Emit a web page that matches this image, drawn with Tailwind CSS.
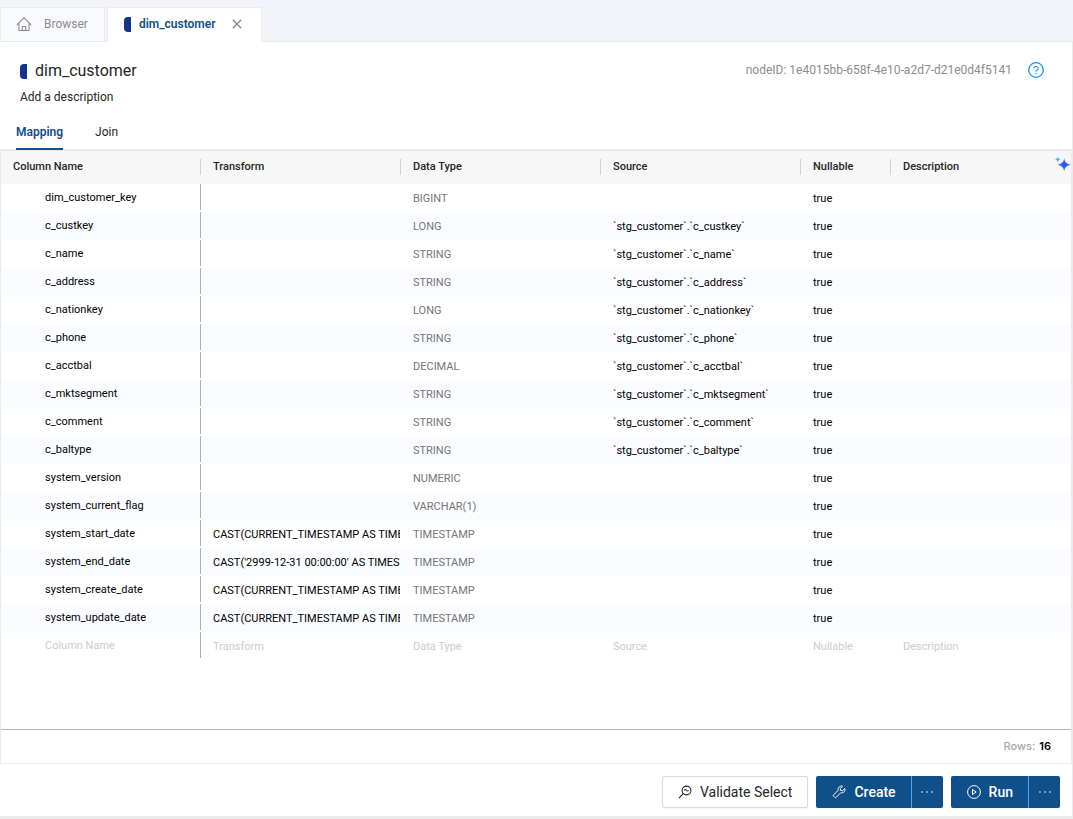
<!DOCTYPE html>
<html lang="en">
<head>
  <meta charset="UTF-8">
  <meta name="viewport" content="width=device-width, initial-scale=1">
  <title>dim_customer</title>
  <script src="https://cdn.jsdelivr.net/npm/@tailwindcss/browser@4"></script>
</head>
<body class="flex min-h-screen flex-col bg-[#f3f4f9] font-['Roboto',sans-serif] text-[#262626]">
  <!-- open files -->
  <nav class="flex h-[42px] items-end gap-0.5 border-b border-[#ebebeb] pt-[7px] text-xs">
    <a href="#" class="flex h-full items-center gap-3 border border-b-0 border-[#ebebeb] bg-[#f9fafd] pr-4 pb-0.5 pl-[15px] text-[#8c8c8c]">
      <svg class="size-4" viewBox="0 0 16 16" fill="none" stroke="currentColor" stroke-width="1.1" stroke-linejoin="round" stroke-linecap="round"><path d="M1.200 8.700 8 1.900l6.800 6.800M3 7.200v7.300h10V7.200M6.300 14.300v-3.800h3.400v3.800"/></svg>
      Browser
    </a>
    <div class="-mb-px flex h-[35px] items-center border border-b-0 border-[#ebebeb] bg-white px-4 pb-0.5">
      <a href="#" class="flex items-center gap-2 font-semibold text-[#0f4f8a]">
        <span class="h-[15px] w-[7px] rounded-l bg-[#13338f]"></span>
        dim_customer
      </a>
      <button type="button" aria-label="Close tab" class="ml-[13px] p-0.5 text-[#8c8c8c]">
        <svg class="size-3" viewBox="0 0 12 12" fill="none" stroke="currentColor" stroke-width="1.4"><path d="m1.8 1.8 8.4 8.4M10.2 1.8l-8.400 8.400"/></svg>
      </button>
    </div>
  </nav>

  <main class="flex flex-1 flex-col border-r border-b-3 border-[#ebebeb] bg-white">
    <header class="flex items-start justify-between px-5 pt-4">
      <div class="pt-px">
        <h1 class="flex items-center gap-2 text-base">
          <span class="h-[15px] w-[7px] rounded-l bg-[#13338f]"></span>
          dim_customer
        </h1>
        <p class="mt-1.5 text-xs">Add a description</p>
      </div>
      <div class="flex h-6 items-center gap-4 pr-2 text-xs text-[#8c8c8c]">
        <span>nodeID: 1e4015bb-658f-4e10-a2d7-d21e0d4f5141</span>
        <button type="button" aria-label="Help" class="text-[#1890ff]">
          <svg class="size-4" viewBox="0 0 16 16" fill="none" stroke="currentColor" stroke-width="1.3"><circle cx="8" cy="8" r="7.3"/><path stroke-width="1.1" d="M5.800 6.500c0-1.200 1-2 2.200-2s2.200.8 2.200 2c0 .8-.5 1.400-1.300 1.700-.6.3-.9.600-.9 1.300v.3"/><circle cx="8" cy="11.500" r=".7" fill="currentColor" stroke="none"/></svg>
        </button>
      </div>
    </header>

    <div class="mt-[19px] flex gap-8 border-b-2 border-[#ebebeb] px-4 text-xs">
      <a href="#" class="-mb-px border-b-2 border-[#0f4f8a] pb-2 font-semibold text-[#0f4f8a]">Mapping</a>
      <a href="#" class="pb-2">Join</a>
    </div>

    <section class="flex flex-1 flex-col border-x border-b border-[#ebebeb]">
      <div class="relative">
        <table class="w-full table-fixed text-left text-[11px]">
          <colgroup>
            <col class="w-[200px]">
            <col class="w-[200px]">
            <col class="w-[200px]">
            <col class="w-[200px]">
            <col class="w-[90px]">
            <col>
          </colgroup>
          <thead class="bg-[#f7f7f7]">
            <tr class="h-[33px]">
              <th class="p-0 pb-0.5 font-medium"><div class="border-r border-[#d0d3d6] px-3 leading-4">Column Name</div></th>
              <th class="p-0 pb-0.5 font-medium"><div class="border-r border-[#d0d3d6] px-3 leading-4">Transform</div></th>
              <th class="p-0 pb-0.5 font-medium"><div class="border-r border-[#d0d3d6] px-3 leading-4">Data Type</div></th>
              <th class="p-0 pb-0.5 font-medium"><div class="border-r border-[#d0d3d6] px-3 leading-4">Source</div></th>
              <th class="p-0 pb-0.5 font-medium"><div class="border-r border-[#d0d3d6] px-3 leading-4">Nullable</div></th>
              <th class="p-0 pb-0.5 font-medium"><div class="px-3 leading-4">Description</div></th>
            </tr>
          </thead>
          <tbody id="columns" class="text-black"></tbody>
        </table>
        <button type="button" aria-label="Generate descriptions" class="absolute top-1 right-0">
          <svg class="size-[18px]" viewBox="0 0 18 18">
            <defs>
              <radialGradient id="spark"><stop offset=".25" stop-color="#1f5cff"/><stop offset="1" stop-color="#b46fdc"/></radialGradient>
            </defs>
            <path fill="url(#spark)" d="M11.200 3c.9 4.300 2 5.600 6.800 6.700-4.800 1.100-5.900 2.400-6.800 6.700-.9-4.300-2-5.600-6.800-6.700C9.200 8.600 10.300 7.300 11.200 3z"/>
            <path fill="#45b4ee" d="M4.800 1.600c.4 1.900 1 2.500 2.900 2.900-1.900.4-2.500 1-2.900 2.900-.4-1.900-1-2.500-2.900-2.900 1.900-.4 2.500-1 2.900-2.900z"/>
          </svg>
        </button>
      </div>
      <div class="mt-auto flex h-[34px] items-center justify-end gap-1 border-t border-[#b4b7ba] pr-5 font-['Inter',sans-serif] text-[11px] font-medium text-[#a6a6a6]">
        Rows: <span class="font-semibold text-black">16</span>
      </div>
    </section>

    <footer class="flex justify-end gap-2 px-3 pt-3 pb-2 text-sm">
      <button type="button" class="flex h-8 items-center gap-2 rounded-xs border border-[#d9d9d9] px-[15px] shadow-xs">
        <svg class="size-3.5" viewBox="0 0 14 14" fill="none" stroke="currentColor" stroke-width="1.100" stroke-linecap="round"><circle cx="8.500" cy="5.500" r="4.400"/><path d="M5.300 8.700 1.200 12.800M6.600 5.100c.5-.9 1.200-.8 1.800.2.600.9 1.400 1 2 .2"/></svg>
        Validate Select
      </button>
      <div class="flex h-8 rounded-xs bg-[#0f4f8a] text-white shadow-xs">
        <button type="button" class="flex items-center gap-2 pr-[15px] pl-4 font-medium">
          <svg class="size-3.5" viewBox="0 0 14 14" fill="none" stroke="currentColor" stroke-width="1" stroke-linejoin="round"><path d="M10.500 1.200 8.300 3.400l.3 2 2 .3 2.200-2.200c.4 1.400.1 2.600-.7 3.400-.9.9-2.100 1.100-3.300.8l-4.700 4.700c-.4.400-1 .4-1.400 0l-1.100-1.100c-.4-.4-.4-1 0-1.400l4.700-4.700c-.3-1.200-.1-2.400.8-3.300.8-.8 2-1.100 3.400-.7z"/></svg>
          Create
        </button>
        <button type="button" aria-label="More create options" class="flex w-8 items-center justify-center border-l border-[#40a9ff]">
          <svg class="size-3.5" viewBox="0 0 14 14" fill="currentColor"><circle cx="2" cy="7" r=".8"/><circle cx="7" cy="7" r=".8"/><circle cx="12" cy="7" r=".8"/></svg>
        </button>
      </div>
      <div class="flex h-8 rounded-xs bg-[#0f4f8a] text-white shadow-xs">
        <button type="button" class="flex items-center gap-2 pr-[15px] pl-4 font-medium">
          <svg class="size-3.5" viewBox="0 0 14 14" fill="none" stroke="currentColor" stroke-width="1" stroke-linejoin="round"><circle cx="7" cy="7" r="6.400"/><path d="M5.500 4.500v5L9.200 7z"/></svg>
          Run
        </button>
        <button type="button" aria-label="More run options" class="flex w-8 items-center justify-center border-l border-[#40a9ff]">
          <svg class="size-3.5" viewBox="0 0 14 14" fill="currentColor"><circle cx="2" cy="7" r=".8"/><circle cx="7" cy="7" r=".8"/><circle cx="12" cy="7" r=".8"/></svg>
        </button>
      </div>
    </footer>
  </main>

  <script>
    const columns = [
      { name: 'dim_customer_key', type: 'BIGINT' },
      { name: 'c_custkey', type: 'LONG', source: '`stg_customer`.`c_custkey`' },
      { name: 'c_name', type: 'STRING', source: '`stg_customer`.`c_name`' },
      { name: 'c_address', type: 'STRING', source: '`stg_customer`.`c_address`' },
      { name: 'c_nationkey', type: 'LONG', source: '`stg_customer`.`c_nationkey`' },
      { name: 'c_phone', type: 'STRING', source: '`stg_customer`.`c_phone`' },
      { name: 'c_acctbal', type: 'DECIMAL', source: '`stg_customer`.`c_acctbal`' },
      { name: 'c_mktsegment', type: 'STRING', source: '`stg_customer`.`c_mktsegment`' },
      { name: 'c_comment', type: 'STRING', source: '`stg_customer`.`c_comment`' },
      { name: 'c_baltype', type: 'STRING', source: '`stg_customer`.`c_baltype`' },
      { name: 'system_version', type: 'NUMERIC' },
      { name: 'system_current_flag', type: 'VARCHAR(1)' },
      { name: 'system_start_date', type: 'TIMESTAMP', transform: 'CAST(CURRENT_TIMESTAMP AS TIMESTAMP)' },
      { name: 'system_end_date', type: 'TIMESTAMP', transform: "CAST('2999-12-31 00:00:00' AS TIMESTAMP)" },
      { name: 'system_create_date', type: 'TIMESTAMP', transform: 'CAST(CURRENT_TIMESTAMP AS TIMESTAMP)' },
      { name: 'system_update_date', type: 'TIMESTAMP', transform: 'CAST(CURRENT_TIMESTAMP AS TIMESTAMP)' }
    ];

    const field = label => `<input aria-label="New ${label}" placeholder="${label}" class="w-full placeholder:text-[#cccccc]">`;

    const rows = columns.map(c => `
      <tr class="h-7 even:bg-[#fbfcff]">
        <td class="p-0 align-top"><div class="h-[26px] border-r border-[#a9b1b8] pl-11 leading-7">${c.name}</div></td>
        <td class="p-0 pt-0.5 pr-px pl-3"><div class="overflow-hidden whitespace-nowrap">${c.transform || ''}</div></td>
        <td class="p-0 pt-0.5 pl-3 text-[#757575]">${c.type}</td>
        <td class="p-0 pt-0.5 pl-3 whitespace-nowrap">${c.source || ''}</td>
        <td class="p-0 pt-0.5 pl-3">true</td>
        <td class="p-0 pt-0.5 pl-3"></td>
      </tr>
    `).join('');

    // last row is where a new column gets typed in
    document.getElementById('columns').innerHTML = rows + `
      <tr class="h-7">
        <td class="p-0 align-top"><div class="flex h-[26px] items-center border-r border-[#a9b1b8] pt-0.5 pl-11">${field('Column Name')}</div></td>
        <td class="p-0 pt-0.5 pl-3">${field('Transform')}</td>
        <td class="p-0 pt-0.5 pl-3">${field('Data Type')}</td>
        <td class="p-0 pt-0.5 pl-3">${field('Source')}</td>
        <td class="p-0 pt-0.5 pl-3">${field('Nullable')}</td>
        <td class="p-0 pt-0.5 pl-3">${field('Description')}</td>
      </tr>
    `;
  </script>
</body>
</html>
